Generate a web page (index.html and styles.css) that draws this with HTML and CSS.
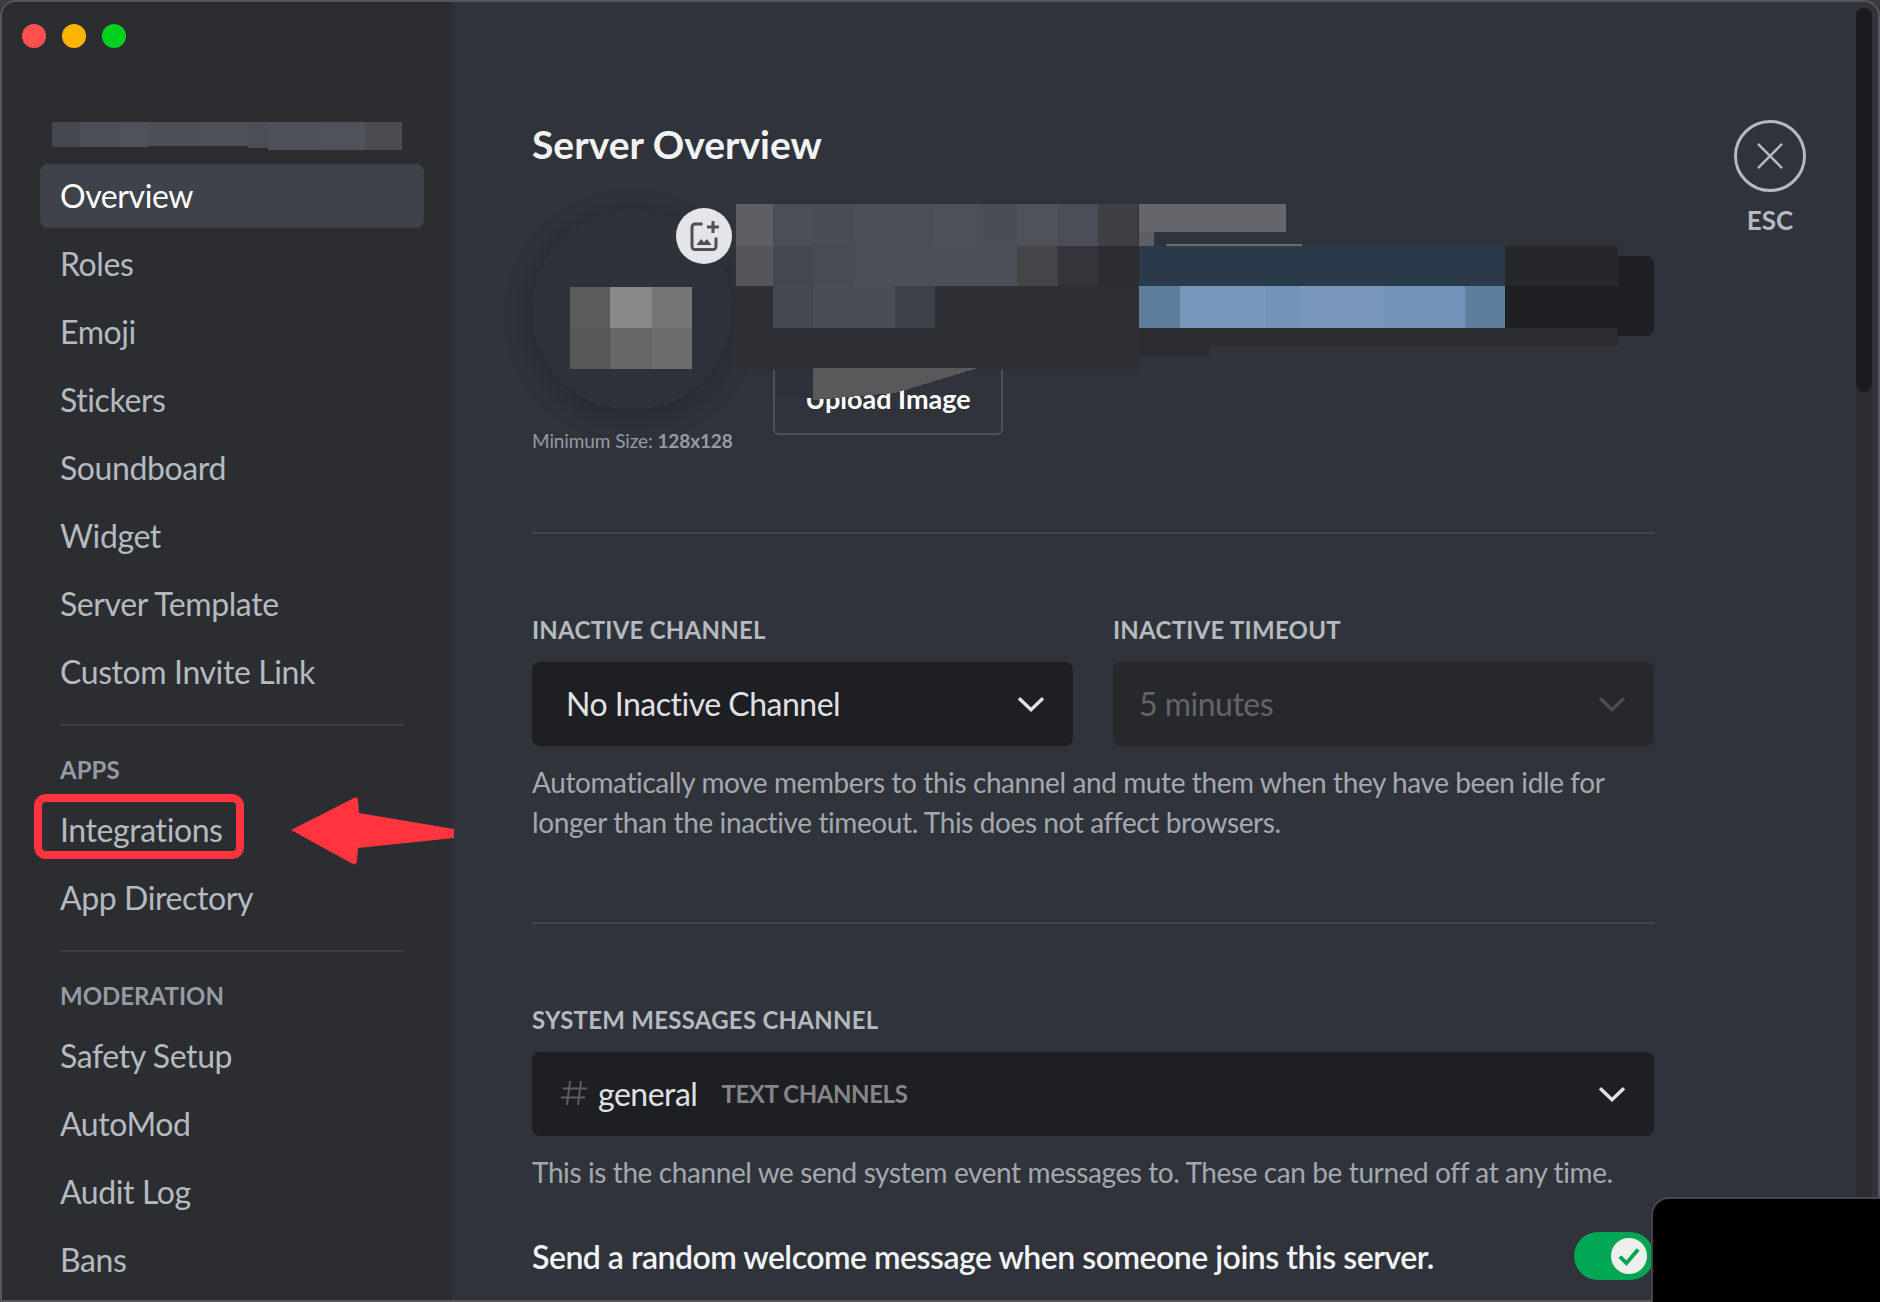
FILE: index.html
```html
<!DOCTYPE html>
<html lang="en">
<head>
  <meta charset="UTF-8" />
  <title>Server Overview</title>
  <link rel="stylesheet" href="styles.css">
</head>
<body>
  <div class="window">
    <aside class="sidebar">
      <div class="lights">
        <span class="light red"></span>
        <span class="light yellow"></span>
        <span class="light green"></span>
      </div>
      <div class="server-name"></div>
      <nav class="nav">
        <a class="item active">Overview</a>
        <a class="item">Roles</a>
        <a class="item">Emoji</a>
        <a class="item">Stickers</a>
        <a class="item">Soundboard</a>
        <a class="item">Widget</a>
        <a class="item">Server Template</a>
        <a class="item">Custom Invite Link</a>
        <div class="sep"></div>
        <div class="group">APPS</div>
        <a class="item">Integrations</a>
        <a class="item">App Directory</a>
        <div class="sep"></div>
        <div class="group">MODERATION</div>
        <a class="item">Safety Setup</a>
        <a class="item">AutoMod</a>
        <a class="item">Audit Log</a>
        <a class="item">Bans</a>
      </nav>
    </aside>

    <main class="main">
      <div class="content">
        <h2 class="title">Server Overview</h2>

        <div class="overview">
          <div class="avatar-col">
            <div class="avatar"></div>
            <p class="min-size">Minimum Size: <b>128x128</b></p>
          </div>
          <button class="upload">Upload Image</button>
        </div>

        <div class="rule"></div>

        <div class="two-col">
          <div class="field">
            <label class="label">INACTIVE CHANNEL</label>
            <div class="select">
              <span>No Inactive Channel</span>
              <svg class="chev" viewBox="0 0 24 24"><path d="M3 8.5l9 8.5 9-8.5" /></svg>
            </div>
          </div>
          <div class="field">
            <label class="label">INACTIVE TIMEOUT</label>
            <div class="select disabled">
              <span>5 minutes</span>
              <svg class="chev" viewBox="0 0 24 24"><path d="M3 8.5l9 8.5 9-8.5" /></svg>
            </div>
          </div>
        </div>
        <p class="help">Automatically move members to this channel and mute them when they have been idle for longer than the inactive timeout. This does not affect browsers.</p>

        <div class="rule"></div>

        <label class="label">SYSTEM MESSAGES CHANNEL</label>
        <div class="select channel">
          <span class="channel-name">
            <svg class="hash" viewBox="0 0 26 26"><path d="M9 1L6 25M20 1L17 25M2 8.5H26M0 17.5H24" /></svg>
            general<em class="cat">TEXT CHANNELS</em>
          </span>
          <svg class="chev" viewBox="0 0 24 24"><path d="M3 8.5l9 8.5 9-8.5" /></svg>
        </div>
        <p class="help">This is the channel we send system event messages to. These can be turned off at any time.</p>

        <div class="switch-row">
          <span>Send a random welcome message when someone joins this server.</span>
          <span class="toggle">
            <span class="knob">
              <svg viewBox="0 0 20 20"><path d="M3 10.5l5 5 9-10.5" /></svg>
            </span>
          </span>
        </div>
      </div>

      <div class="close">
        <div class="close-ring">
          <svg viewBox="0 0 24 24"><path d="M3.5 3.5l17 17M20.5 3.5l-17 17" /></svg>
        </div>
        <span>ESC</span>
      </div>

      <div class="scrollbar"><div class="thumb"></div></div>
    </main>

    <!-- mosaic blur the screenshot had over private names and images -->
    <svg class="mosaic" viewBox="0 0 1880 1302" shape-rendering="crispEdges">
      <rect x="52" y="122" width="96" height="25" fill="#45484e" />
      <rect x="80" y="122" width="68" height="25" fill="#4b4e56" />
      <rect x="120" y="122" width="28" height="25" fill="#4f525b" />
      <rect x="148" y="122" width="100" height="24" fill="#4c4f56" />
      <rect x="200" y="122" width="48" height="24" fill="#4e5258" />
      <rect x="248" y="122" width="20" height="26" fill="#4b4e56" />
      <rect x="268" y="122" width="52" height="28" fill="#4e5159" />
      <rect x="320" y="122" width="45" height="28" fill="#4f525a" />
      <rect x="365" y="122" width="37" height="28" fill="#4a4c52" />

      <rect x="1500" y="256" width="154" height="80" rx="8" fill="#1e1f22" />

      <rect x="736" y="204" width="402" height="82" fill="#4d4f56" />
      <rect x="736" y="204" width="37" height="42" fill="#5d5f64" />
      <rect x="773" y="204" width="40" height="42" fill="#4b4e55" />
      <rect x="813" y="204" width="42" height="42" fill="#4a4d54" />
      <rect x="935" y="204" width="42" height="42" fill="#4f5158" />
      <rect x="977" y="204" width="40" height="42" fill="#4a4d54" />
      <rect x="1017" y="204" width="41" height="42" fill="#4f5259" />
      <rect x="1058" y="204" width="40" height="42" fill="#4c4e55" />
      <rect x="1098" y="204" width="40" height="42" fill="#3e4044" />
      <rect x="736" y="246" width="37" height="40" fill="#54565a" />
      <rect x="773" y="246" width="40" height="40" fill="#44474e" />
      <rect x="813" y="246" width="42" height="40" fill="#494c53" />
      <rect x="1017" y="246" width="41" height="40" fill="#444548" />
      <rect x="1058" y="246" width="40" height="40" fill="#33353b" />
      <rect x="1098" y="246" width="41" height="40" fill="#2b2d33" />

      <rect x="736" y="286" width="403" height="84" fill="#2e3035" />
      <rect x="773" y="286" width="40" height="42" fill="#45484f" />
      <rect x="813" y="286" width="82" height="42" fill="#4a4d54" />
      <rect x="895" y="286" width="40" height="42" fill="#3e4147" />
      <rect x="775" y="370" width="38" height="28" fill="#2f3238" />
      <polygon points="813,368 978,368 895,393 813,400" fill="#59595c" />

      <rect x="1139" y="204" width="147" height="28" fill="#64666b" />
      <rect x="1139" y="232" width="15" height="14" fill="#5c5e62" />
      <rect x="1166" y="244" width="136" height="2" fill="#6a6c70" />
      <rect x="1139" y="246" width="366" height="40" fill="#2b3a4b" />
      <rect x="1505" y="246" width="113" height="40" fill="#25272b" />
      <rect x="1139" y="286" width="366" height="42" fill="#7294b8" />
      <rect x="1139" y="286" width="41" height="42" fill="#5f7d9c" />
      <rect x="1180" y="286" width="85" height="42" fill="#7899bb" />
      <rect x="1300" y="286" width="85" height="42" fill="#7a96b8" />
      <rect x="1465" y="286" width="40" height="42" fill="#5f7d9c" />
      <rect x="1505" y="286" width="113" height="42" fill="#1e1f22" />
      <rect x="1139" y="328" width="479" height="18" fill="#2b2c30" />
      <rect x="1139" y="346" width="70" height="10" fill="#2b2c30" />

      <rect x="570" y="287" width="40" height="41" fill="#5b5b5c" />
      <rect x="610" y="287" width="42" height="41" fill="#888889" />
      <rect x="652" y="287" width="40" height="41" fill="#757576" />
      <rect x="570" y="328" width="40" height="41" fill="#585859" />
      <rect x="610" y="328" width="42" height="41" fill="#676768" />
      <rect x="652" y="328" width="40" height="41" fill="#6c6c6d" />
    </svg>

    <div class="add-image">
      <svg viewBox="0 0 24 24">
        <path class="frame" d="M11 4H6a2 2 0 0 0-2 2v13a2 2 0 0 0 2 2h12a2 2 0 0 0 2-2v-6" />
        <path class="plus" d="M18 2v8M14 6h8" />
        <path class="hills" d="M7 18l3-4 2 2 2-2 3 4z" />
      </svg>
    </div>

    <!-- arrow and box drawn on top of the screenshot -->
    <div class="callout-box"></div>
    <svg class="callout-arrow" viewBox="0 0 170 80"><path d="M3 40L66 8Q70 6 70 10L71 23 166 39V48L70 58 69 71Q68 76 63 73Z" /></svg>
  </div>

  <div class="camera-corner"></div>
</body>
</html>
```

FILE: styles.css
```css
* {
  box-sizing: border-box;
}
html, body {
  margin: 0;
  height: 100%;
  background: #3a3c40;
}
body {
  position: relative;
  font-family: Lato, sans-serif;
  overflow: hidden;
}
.window {
  position: relative;
  display: flex;
  width: 1880px;
  height: 1302px;
  overflow: hidden;
  background: #30333a;
  border: 2px solid #55575c;
  border-radius: 16px 16px 0 0;
}

/* sidebar */
.sidebar {
  width: 450px;
  flex: none;
  background: #2b2d31;
  padding: 0 28px 0 38px;
}
.lights {
  display: flex;
  gap: 16px;
  margin-left: -18px;
  padding-top: 22px;
}
.light {
  width: 24px;
  height: 24px;
  border-radius: 50%;
}
.red { background: #ff5050; }
.yellow { background: #ffb400; }
.green { background: #00d01c; }
.server-name {
  height: 116px;
}
.nav {
  display: flex;
  flex-direction: column;
}
.item {
  height: 64px;
  margin-bottom: 4px;
  padding: 0 20px;
  border-radius: 8px;
  font-size: 32px;
  letter-spacing: -0.4px;
  line-height: 64px;
  color: #b5bac1;
  white-space: nowrap;
}
.item.active {
  background: #404249;
  color: #fff;
}
.sep {
  height: 2px;
  margin: 16px 20px;
  background: #3a3f47;
}
.group {
  height: 56px;
  padding: 9px 20px 0;
  font-size: 24px;
  font-weight: 700;
  line-height: 38px;
  color: #949ba4;
}

/* main column */
.main {
  position: relative;
  flex: 1;
}
.content {
  width: 1122px;
  margin-left: 80px;
}
.title {
  margin: 0;
  padding-top: 119px;
  font-size: 39px;
  font-weight: 700;
  line-height: 46px;
  color: #f2f3f5;
}
.overview {
  display: flex;
  height: 322px;
  margin-top: 43px;
}
.avatar-col {
  width: 241px;
}
.avatar {
  width: 200px;
  height: 200px;
  border-radius: 50%;
  background: #2f3238;
  box-shadow: 0 6px 30px rgba(0, 0, 0, 0.2);
}
.min-size {
  margin: 18px 0 0;
  font-size: 19px;
  letter-spacing: -0.1px;
  line-height: 26px;
  color: #949ba4;
  white-space: nowrap;
}
.upload {
  align-self: flex-start;
  width: 230px;
  height: 80px;
  margin-top: 145px;
  padding-top: 8px;
  border: 2px solid #4e5058;
  border-radius: 6px;
  background: none;
  font-family: inherit;
  font-size: 27px;
  font-weight: 700;
  color: #fff;
}
.rule {
  height: 2px;
  background: #43454b;
}
.two-col {
  display: grid;
  grid-template-columns: 1fr 1fr;
  gap: 40px;
  margin-top: 80px;
}
.label {
  display: block;
  font-size: 24px;
  font-weight: 700;
  letter-spacing: 0.25px;
  line-height: 32px;
  color: #b5bac1;
}
.select {
  display: flex;
  align-items: center;
  justify-content: space-between;
  height: 84px;
  margin-top: 16px;
  padding: 0 26px 2px 34px;
  border-radius: 8px;
  background: #1e1f22;
  font-size: 32px;
  letter-spacing: -0.5px;
  color: #e0e1e5;
}
.select.disabled {
  padding-left: 26px;
  background: #27282c;
  color: #62646a;
}
.select.disabled .chev path {
  stroke: #4b4c50;
}
.chev {
  width: 32px;
  height: 32px;
}
.chev path {
  fill: none;
  stroke: #e0e1e5;
  stroke-width: 2.6;
}
.help {
  margin: 16px 0 0;
  font-size: 28px;
  letter-spacing: -0.4px;
  line-height: 40px;
  color: #a3a8b0;
}
.help + .rule {
  margin-top: 80px;
}
.rule + .label {
  margin-top: 80px;
}
.channel {
  padding-left: 29px;
}
.channel-name {
  display: flex;
  align-items: center;
}
.hash {
  width: 26px;
  height: 26px;
  margin-right: 11px;
}
.hash path {
  fill: none;
  stroke: #5d5e62;
  stroke-width: 2;
}
.cat {
  margin-left: 24px;
  font-size: 24px;
  font-style: normal;
  font-weight: 700;
  letter-spacing: -0.4px;
  color: #85868a;
}
.switch-row {
  display: flex;
  align-items: center;
  justify-content: space-between;
  margin-top: 40px;
  font-size: 32px;
  font-weight: 600;
  letter-spacing: -0.5px;
  color: #f2f3f5;
}
.toggle {
  display: flex;
  align-items: center;
  justify-content: flex-end;
  width: 80px;
  height: 48px;
  padding-right: 7px;
  border-radius: 24px;
  background: #00a651;
}
.knob {
  display: flex;
  align-items: center;
  justify-content: center;
  width: 36px;
  height: 36px;
  border-radius: 50%;
  background: #eee;
}
.knob svg {
  width: 26px;
  height: 26px;
}
.knob path {
  fill: none;
  stroke: #00a651;
  stroke-width: 3;
}

/* close button */
.close {
  position: absolute;
  top: 118px;
  left: 1282px;
  display: flex;
  flex-direction: column;
  align-items: center;
  gap: 12px;
  color: #b5bac1;
  font-size: 26px;
  font-weight: 700;
}
.close-ring {
  display: flex;
  align-items: center;
  justify-content: center;
  width: 72px;
  height: 72px;
  border: 3px solid #b5bac1;
  border-radius: 50%;
}
.close-ring svg {
  width: 34px;
  height: 34px;
}
.close-ring path {
  fill: none;
  stroke: #b5bac1;
  stroke-width: 1.7;
}
.scrollbar {
  position: absolute;
  top: 6px;
  right: 6px;
  bottom: 0;
  width: 16px;
  border-radius: 8px 8px 0 0;
  background: #2b2d31;
}
.thumb {
  width: 100%;
  height: 384px;
  border-radius: 8px;
  background: #1a1b1e;
}

/* overlays */
.mosaic {
  position: absolute;
  top: -2px;
  left: -2px;
  width: 1880px;
  height: 1302px;
  pointer-events: none;
}
.add-image {
  position: absolute;
  top: 206px;
  left: 674px;
  display: flex;
  align-items: center;
  justify-content: center;
  width: 56px;
  height: 56px;
  border-radius: 50%;
  background: #e3e5e8;
}
.add-image svg {
  width: 36px;
  height: 36px;
}
.frame, .plus {
  fill: none;
  stroke: #4e5058;
  stroke-width: 2;
}
.hills {
  fill: #4e5058;
}
.callout-box {
  position: absolute;
  top: 792px;
  left: 32px;
  width: 210px;
  height: 65px;
  border: 8px solid #ff343f;
  border-radius: 12px;
}
.callout-arrow {
  position: absolute;
  top: 788px;
  left: 286px;
  width: 170px;
  height: 80px;
}
.callout-arrow path {
  fill: #ff343f;
}
.camera-corner {
  position: absolute;
  top: 1197px;
  left: 1651px;
  width: 240px;
  height: 120px;
  border: 2px solid #45464a;
  border-top-left-radius: 18px;
  background: #000;
}
```
